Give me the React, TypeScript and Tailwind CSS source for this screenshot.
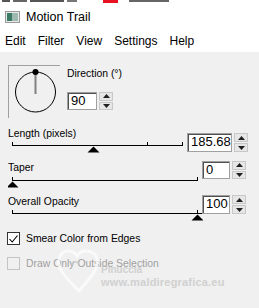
const ui = { fontFamily: '"Liberation Sans", Arial, sans-serif' };

function Spin() {
  return (
    <div className="flex h-full w-[14px] flex-col gap-[1px]">
      <div className="flex flex-1 items-center justify-center border border-[#c8c8c8] bg-[#e6e6e6]">
        <svg width="7" height="4" viewBox="0 0 7 4">
          <path d="M0 4 L3.5 0 L7 4 Z" fill="#202020" />
        </svg>
      </div>
      <div className="flex flex-1 items-center justify-center border border-[#c8c8c8] bg-[#e6e6e6]">
        <svg width="7" height="4" viewBox="0 0 7 4">
          <path d="M0 0 L3.5 4 L7 0 Z" fill="#202020" />
        </svg>
      </div>
    </div>
  );
}

function NumField({ value, w, h }: { value: string; w: string; h: string }) {
  return (
    <div className={`flex gap-[2px] ${h}`}>
      <div
        className={`${w} h-full border border-[#a0a0a0] bg-white px-[3px] text-[13px] leading-[16px] text-black shadow-[inset_1px_1px_0_#505050]`}
      >
        {value}
      </div>
      <Spin />
    </div>
  );
}

function Track({ width, lineY, ticks, thumb, h }: { width: number; lineY: number; ticks: number[]; thumb: number; h: number }) {
  return (
    <svg width={width} height={h} viewBox={`0 0 ${width} ${h}`} className="block">
      <line x1={4} y1={lineY + 0.5} x2={width - 1} y2={lineY + 0.5} stroke="#000" strokeWidth="1" />
      {ticks.map((t) => (
        <line key={t} x1={t + 0.5} y1={lineY - 3} x2={t + 0.5} y2={lineY + 1} stroke="#000" strokeWidth="1" />
      ))}
      <path d={`M${thumb + 0.5} ${lineY + 1.5} L${thumb + 6.5} ${lineY + 7.5} L${thumb - 5.5} ${lineY + 7.5} Z`} fill="#000" />
    </svg>
  );
}

export default function App() {
  return (
    <div className="relative h-[308px] w-[259px] overflow-hidden bg-[#f0f0f0]" style={ui}>
      {/* bit of the window behind */}
      <div className="flex h-[4px] items-start gap-[3px] bg-white pl-[2px]">
        <span className="h-[2px] w-[8px] bg-[#555]" />
        <span className="h-[2px] w-[14px] bg-[#666]" />
        <span className="h-[2px] w-[34px] bg-[#555]" />
        <span className="h-[2px] w-[10px] bg-[#777]" />
        <span className="ml-[23px] h-[3px] w-[15px] bg-[#e81123]" />
        <span className="ml-[8px] h-[2px] w-[40px] bg-[#666]" />
      </div>

      <div className="flex h-[26px] items-center gap-[6px] bg-white pl-[5px]">
        <div className="flex h-[12px] w-[15px] border border-[#9a9a9a] bg-[#e8e8e8] p-[1px]">
          <div className="h-full w-[5px] bg-[#3c7a68]" />
          <div className="h-full w-[6px] bg-[#9fb9b0]" />
        </div>
        <span className="text-[12.5px] text-black">Motion Trail</span>
      </div>

      <div className="flex h-[22px] items-center gap-[12px] bg-white pl-[5px] text-[12px] text-black">
        <span>Edit</span>
        <span>Filter</span>
        <span>View</span>
        <span>Settings</span>
        <span>Help</span>
      </div>

      <div className="px-[8px] pt-[13px] text-[10.4px] text-black">
        <div className="flex">
          <div className="h-[53px] w-[52px] border-l border-t border-[#a0a0a0] border-b-white border-r-white">
            <svg width="50" height="51" viewBox="0 0 50 51" className="block">
              <circle cx="26.5" cy="26" r="20" fill="none" stroke="#000" strokeWidth="1" />
              <line x1="26.5" y1="6" x2="26.5" y2="28" stroke="#808080" strokeWidth="2" />
              <circle cx="26.5" cy="6" r="3" fill="#000" />
            </svg>
          </div>
          <div className="ml-[7px] flex flex-col">
            <div className="mt-[2px] h-[13px] leading-[13px]">Direction (°)</div>
            <div className="mt-[12px]">
              <NumField value="90" w="w-[30px]" h="h-[18px]" />
            </div>
          </div>
        </div>

        <div className="mt-[9px] flex">
          <div className="w-[176px]">
            <div className="h-[13px] leading-[13px]">Length (pixels)</div>
            <Track width={176} h={13} lineY={5} ticks={[4, 139, 174]} thumb={85} />
          </div>
          <div className="ml-[3px] mt-[6px]">
            <NumField value="185.68" w="w-[45px]" h="h-[19px]" />
          </div>
        </div>

        <div className="mt-[8px] flex">
          <div className="w-[191px]">
            <div className="h-[13px] leading-[13px]">Taper</div>
            <Track width={191} h={14} lineY={6} ticks={[4, 189]} thumb={4} />
          </div>
          <div className="ml-[3px]">
            <NumField value="0" w="w-[28px]" h="h-[18px]" />
          </div>
        </div>

        <div className="mt-[7px] flex">
          <div className="w-[191px]">
            <div className="h-[13px] leading-[13px]">Overall Opacity</div>
            <Track width={195} h={14} lineY={5} ticks={[4, 189]} thumb={189} />
          </div>
          <div className="ml-[3px]">
            <NumField value="100" w="w-[28px]" h="h-[19px]" />
          </div>
        </div>

        <div className="mt-[10px] flex items-center gap-[6px] -ml-[1px]">
          <div className="flex h-[13px] w-[13px] items-center justify-center border border-[#333] bg-white">
            <svg width="9" height="8" viewBox="0 0 9 8">
              <path d="M0.5 4 L3.2 7 L8.5 0.5" fill="none" stroke="#000" strokeWidth="1.1" />
            </svg>
          </div>
          <span className="leading-[13px]">Smear Color from Edges</span>
        </div>

        <div className="mt-[12px] flex items-center gap-[6px] -ml-[1px] text-[#a0a0a0]">
          <div className="h-[13px] w-[13px] border border-[#c4c4c4] bg-[#f0f0f0]" />
          <span className="leading-[13px]">Draw Only Outside Selection</span>
        </div>
      </div>

      {/* watermark */}
      <div className="pointer-events-none absolute left-[55px] top-[245px] flex items-start opacity-70">
        <svg width="48" height="50" viewBox="0 0 48 50">
          <path d="M24 46 C10 32 2 24 4 14 C6 5 17 3 22 11 C27 3 40 5 42 14 C44 24 36 32 24 46 Z" fill="none" stroke="#ffffff" strokeWidth="3" />
          <path d="M16 20 C18 16 22 16 24 19" fill="none" stroke="#c8c8c8" strokeWidth="2" />
        </svg>
        <div className="ml-[-2px] mt-[19px] flex flex-col font-bold leading-[11px] text-[#c4c4c4]">
          <span className="text-[10px]">Pinuccia</span>
          <span className="mt-[2px] text-[11px] tracking-[0.2px]">www.maldiregrafica.eu</span>
        </div>
      </div>
    </div>
  );
}
